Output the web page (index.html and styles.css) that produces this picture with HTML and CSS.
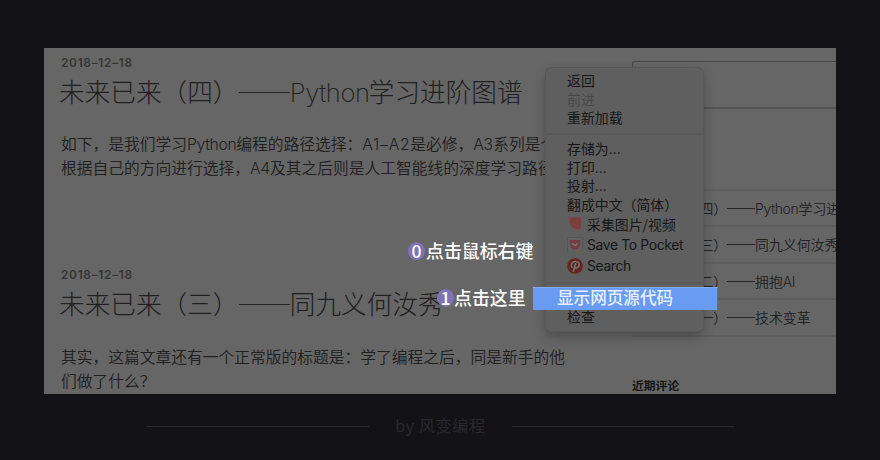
FILE: index.html
```html
<!DOCTYPE html>
<html lang="zh-CN">
<head>
<meta charset="utf-8">
<title>未来已来</title>
<link rel="stylesheet" href="styles.css">
</head>
<body>
<main class="stage">
  <div class="blog">
    <section class="posts">
      <article class="post">
        <time>2018–12–18</time>
        <h1>未来已来（四）<i class="dash"></i><span class="latin">Python</span>学习进阶图谱</h1>
        <p>如下，是我们学习<span class="py">Python</span>编程的路径选择：<span class="code">A1–A2</span>是必修，<span class="a">A3</span>系列是个<br>根据自己的方向进行选择，<span class="a">A4</span>及其之后则是人工智能线的深度学习路径</p>
      </article>
      <article class="post">
        <time>2018–12–18</time>
        <h1>未来已来（三）<i class="dash"></i>同九义何汝秀</h1>
        <p>其实，这篇文章还有一个正常版的标题是：学了编程之后，同是新手的他<br>们做了什么？</p>
      </article>
    </section>
    <aside class="sidebar">
      <div class="search"></div>
      <ul class="recent">
        <li>未来已来（四）<i class="dash"></i><span class="py">Python</span>学习进</li>
        <li>未来已来（三）<i class="dash"></i>同九义何汝秀</li>
        <li>未来已来（二）<i class="dash"></i>拥抱<span class="ai">AI</span></li>
        <li>未来已来（一）<i class="dash"></i>技术变革</li>
      </ul>
      <h2>近期评论</h2>
    </aside>
  </div>
  <div class="menu">
    <div class="group first">
      <div class="item">返回</div>
      <div class="item off">前进</div>
      <div class="item">重新加载</div>
    </div>
    <div class="group second">
      <div class="item">存储为<span class="en">...</span></div>
      <div class="item">打印<span class="en">...</span></div>
      <div class="item">投射<span class="en">...</span></div>
      <div class="item">翻成中文（简体）</div>
      <div class="item ext"><svg width="16" height="16" viewBox="0 0 16 16"><path d="M1 1.5H14V15Q2 15 1 1.5Z" fill="#765354"/><path d="M3 1.5H14V12.5Q9 14.5 5.2 11Q1.5 7 3 1.5Z" fill="#7a3f41"/></svg>采集图片/视频</div>
      <div class="item ext"><svg width="16" height="16" viewBox="0 0 16 16"><rect x=".5" y=".5" width="15" height="15" fill="#626262" stroke="#565656"/><path d="M0 15.5H8" stroke="#456660"/><path d="M8 15.5H16" stroke="#765e48"/><path d="M2.8 4Q2.8 3 3.8 3H12.2Q13.2 3 13.2 4V7.3A5.2 5.2 0 0 1 2.8 7.3Z" fill="#713c42"/><path d="M5.4 6.4L8 8.8L10.6 6.4" fill="none" stroke="#777" stroke-width="1.4" stroke-linecap="round" stroke-linejoin="round"/></svg><span class="en pocket">Save To Pocket</span></div>
      <div class="item ext"><svg width="16" height="16" viewBox="0 0 16 16"><circle cx="8" cy="8" r="7.8" fill="#64251f"/><path d="M4.9 9.2C3.2 6.8 5 3.5 8.5 3.5C11.5 3.5 12.8 5.8 11.8 8.2C10.8 10.5 8.4 10.3 7.7 9.1M8.5 6L6.5 13.3" fill="none" stroke="#747070" stroke-width="1.7" stroke-linecap="round"/></svg><span class="en find">Search</span></div>
    </div>
    <div class="group third">
      <div class="item">检查</div>
    </div>
  </div>
  <div class="highlight">显示网页源代码</div>
  <div class="step zero"><b>0</b><span>点击鼠标右键</span></div>
  <div class="step one"><b>1</b><span>点击这里</span></div>
</main>
<footer class="credit"><span>by 风变编程</span></footer>
</body>
</html>
```
FILE: styles.css
```css
* { box-sizing: border-box; }
body {
  margin: 0;
  width: 880px;
  height: 460px;
  overflow: hidden;
  padding: 48px 44px 0;
  background: #131217;
  color: #202020;
  font-family: "Noto Sans CJK SC", sans-serif;
  white-space: nowrap;
}
.stage { position: relative; width: 792px; height: 346px; }
.blog {
  display: flex;
  height: 346px;
  overflow: hidden;
  background: #666;
}
.posts { width: 588px; flex: none; padding-left: 17px; }
.post { height: 212px; padding-top: 7px; }
time {
  display: block;
  height: 16px;
  font: 600 11.8px/16px Inter, sans-serif;
  letter-spacing: .75px;
  color: #343434;
}
h1 {
  height: 32px;
  margin: 4px 0 0 -2px;
  font-size: 25.65px;
  line-height: 32px;
  font-weight: 200;
  color: #202020;
}
.latin, .py, .code, .a, .ai, .en { font-family: Inter, sans-serif; line-height: 1; }
.dash {
  display: inline-block;
  width: 2em;
  height: 1px;
  background: #272727;
  vertical-align: .36em;
}
.latin { display: inline-block; width: 79px; font-size: 25.6px; letter-spacing: -.35px; }
p {
  margin: 26px 0 0;
  font-size: 15.75px;
  line-height: 24px;
  font-weight: 350;
}
.post:first-child p { margin-top: 25px; }
.py { display: inline-block; width: 3.13em; letter-spacing: -.35px; }
.code { display: inline-block; width: 48px; letter-spacing: .75px; }
.a { display: inline-block; width: 20px; letter-spacing: -.4px; }
.ai { letter-spacing: -.5px; }
.sidebar { width: 204px; flex: none; padding-top: 13px; }
.search {
  height: 48px;
  border: solid #494949;
  border-width: 1px 0 2px 1px;
  border-bottom-color: #525252;
  border-radius: 3px 0 0 0;
}
.recent {
  list-style: none;
  margin: 80px 0 0;
  padding: 0;
  border-top: 2px solid #5d5d5d;
}
.recent li {
  height: 36.4px;
  line-height: 34.5px;
  border-bottom: 2px solid #5d5d5d;
  font-size: 13.9px;
  font-weight: 350;
  text-indent: -2px;
}
.recent .py { text-indent: 0; }
h2 {
  margin: 38.4px 0 0;
  font-size: 11.8px;
  line-height: 20px;
  font-weight: 700;
  color: #151515;
}
.menu {
  position: absolute;
  left: 502px;
  top: 20px;
  width: 157px;
  height: 263px;
  background: #5f5f5f;
  border-radius: 5px;
  box-shadow: 0 0 0 1px #585858, 0 5px 12px rgba(0,0,0,.28);
}
.group { padding-left: 21px; border-bottom: 2px solid #585858; }
.group:last-child { border: 0; }
.first { height: 67px; padding-top: 3px; }
.second { height: 149px; padding-top: 4px; }
.third { padding-top: 23px; }
.item {
  height: 18.7px;
  line-height: 18.7px;
  font-size: 13.9px;
  font-weight: 400;
  color: #171717;
}
.off { color: #484848; }
.ext { display: flex; align-items: center; gap: 4px; height: 21px; line-height: 21px; }
.ext svg { flex: none; }
.en { position: relative; top: 1px; }
.item:not(.ext) .en { top: 0; }
.pocket { letter-spacing: -.36px; }
.find { letter-spacing: -.38px; }
.highlight {
  position: absolute;
  left: 489px;
  top: 239px;
  width: 185px;
  height: 23px;
  padding-left: 24px;
  background: #689bf1;
  border-right: 1px solid #4676c8;
  border-top: 1px solid #83adf0;
  color: #e5efff;
  font-size: 16.6px;
  line-height: 19px;
  font-weight: 500;
}
.step {
  position: absolute;
  display: flex;
  align-items: center;
  color: #fff;
  font-size: 17.9px;
  line-height: 24px;
  font-weight: 500;
}
.step b {
  width: 17px;
  height: 18px;
  margin-right: 1px;
  border-radius: 50%;
  background: #8073b4;
  text-align: center;
  font: 500 17.5px/17px "Noto Sans CJK SC", sans-serif;
}
.step span { position: relative; top: -1px; }
.zero { left: 364px; top: 191px; }
.one { left: 393px; top: 238px; }
.one span { left: -1px; }
.credit {
  display: flex;
  align-items: center;
  gap: 26px;
  width: 587px;
  margin: 21px 0 0 103px;
  color: #29282d;
  font-size: 16px;
  line-height: 22px;
  letter-spacing: .65px;
}
.credit span { position: relative; top: -1px; }
.credit::before, .credit::after { content: ""; flex: 1; height: 1px; background: #29282d; }
```
